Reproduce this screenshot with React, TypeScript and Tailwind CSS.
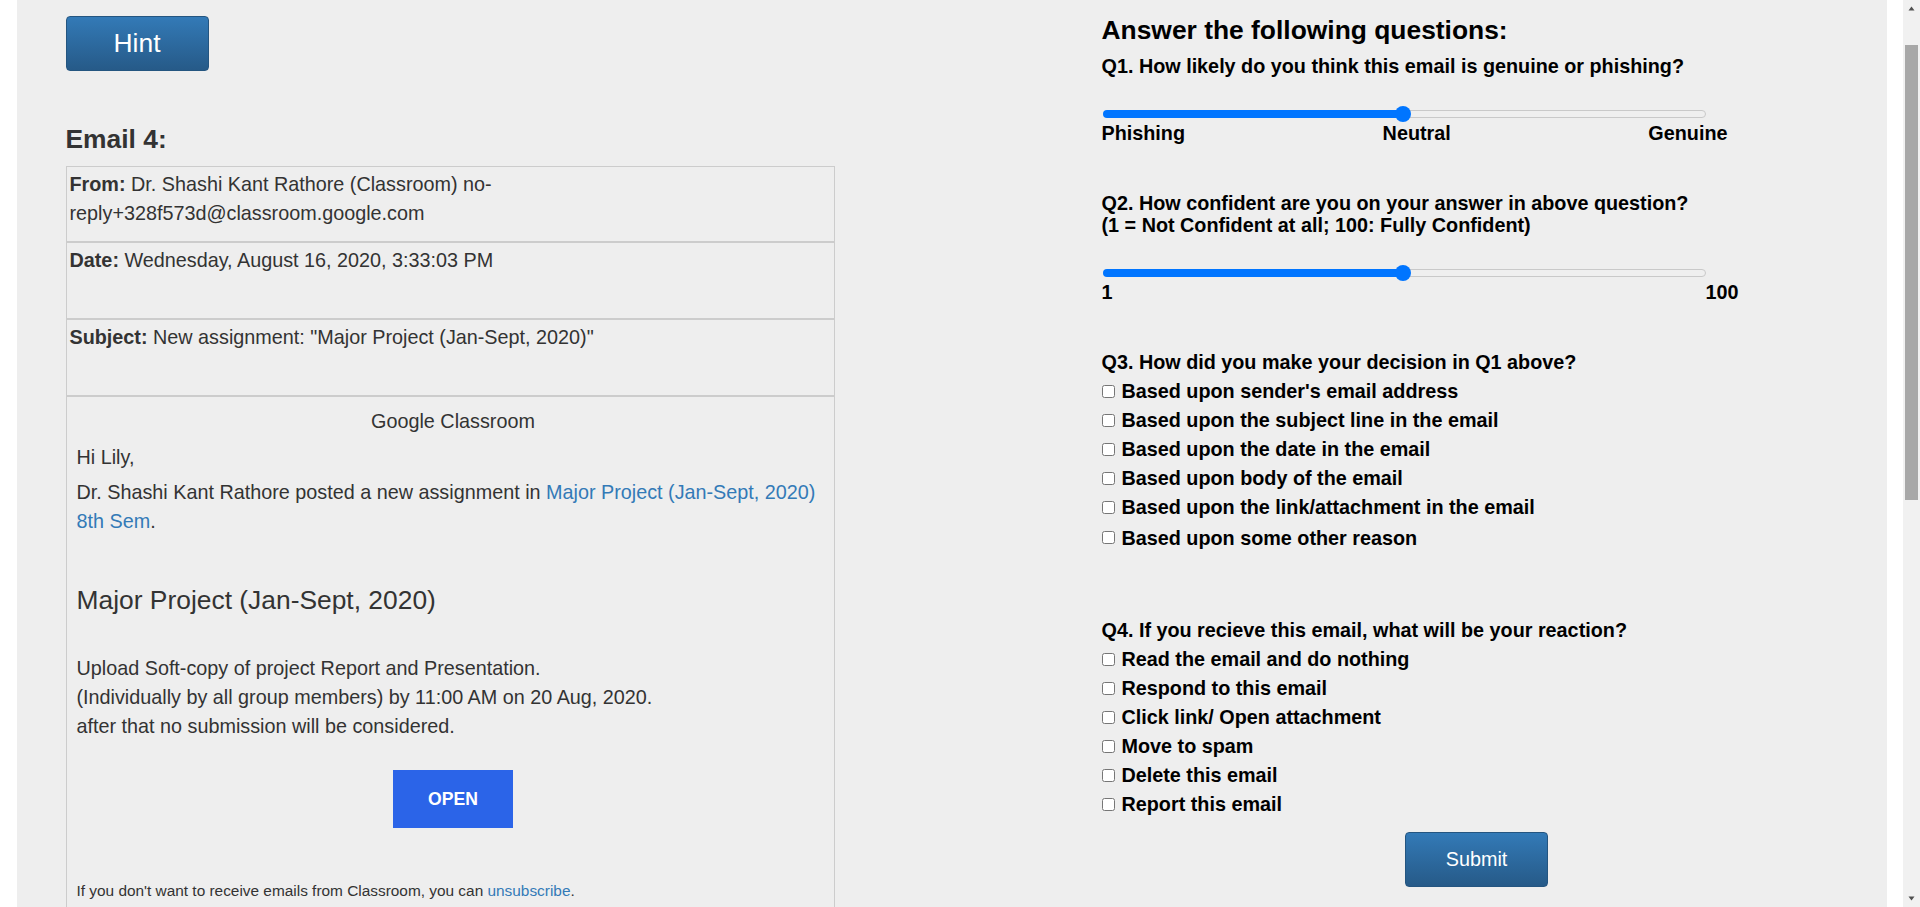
import React from "react";

const q3 = [
  "Based upon sender's email address",
  "Based upon the subject line in the email",
  "Based upon the date in the email",
  "Based upon body of the email",
  "Based upon the link/attachment in the email",
  "Based upon some other reason",
];

const q4 = [
  "Read the email and do nothing",
  "Respond to this email",
  "Click link/ Open attachment",
  "Move to spam",
  "Delete this email",
  "Report this email",
];

function Slider() {
  return (
    <div className="ml-[1px] flex h-[16px] w-[603px] items-center">
      <div className="h-[8px] flex-1 rounded-l-full bg-[#0075ff]" />
      <div className="relative z-10 -mx-[8px] h-[16px] w-[16px] shrink-0 rounded-full bg-[#0075ff]" />
      <div className="h-[8px] flex-1 rounded-r-full border border-[#c9c9c9] bg-[#efefef]" />
    </div>
  );
}

function CheckItem({ label, className }: { label: string; className?: string }) {
  return (
    <label className={"flex h-[22px] shrink-0 items-center " + (className ?? "")}>
      <span className="h-[13px] w-[13px] shrink-0 rounded-[2.5px] border border-[#767676] bg-white" />
      <span className="ml-[7px]">{label}</span>
    </label>
  );
}

export default function App() {
  return (
    <div className="flex h-[907px] w-full overflow-hidden bg-white font-['Liberation_Sans',Arial,sans-serif]">
      <div className="flex min-w-0 flex-1 justify-center">
        <div className="flex h-full w-[1870px] shrink-0 items-start bg-[#eeeeee]">
          {/* Left column */}
          <div className="ml-[49px] block w-[769px] shrink-0 pt-[16px] text-[19.8px] leading-[28.6px] text-[#333]">
            <button className="flex h-[55px] w-[143px] items-center justify-center rounded-[4px] border border-[#245580] bg-linear-to-b from-[#337ab7] to-[#265a88] text-[26.4px] leading-none text-white">
              Hint
            </button>
            <h3 className="mt-[54px] text-[26.4px] font-bold leading-[29px] text-[#333]">Email 4:</h3>
            <div className="mt-[12px] border border-[#cccccc]">
              <div className="h-[76px] border-b-2 border-[#cccccc] px-[3px] pt-[3px]">
                <b>From:</b> Dr. Shashi Kant Rathore (Classroom) no-
                <br />
                reply+328f573d@classroom.google.com
              </div>
              <div className="h-[77px] border-b-2 border-[#cccccc] px-[3px] pt-[3px]">
                <b>Date:</b> Wednesday, August 16, 2020, 3:33:03 PM
              </div>
              <div className="h-[77px] border-b-2 border-[#cccccc] px-[3px] pt-[3px]">
                <b>Subject:</b> New assignment: "Major Project (Jan-Sept, 2020)"
              </div>
              <div className="pl-[10px] pr-[4px] pt-[10px] pb-[40px]">
                <p className="text-center">Google Classroom</p>
                <p className="mt-[7px]">Hi Lily,</p>
                <p className="mt-[7px]">
                  Dr. Shashi Kant Rathore posted a new assignment in{" "}
                  <a className="text-[#337ab7]">
                    Major Project (Jan-Sept, 2020)
                    <br />
                    8th Sem
                  </a>
                  .
                </p>
                <p className="mt-[51px] text-[26.4px] leading-[29px]">Major Project (Jan-Sept, 2020)</p>
                <p className="mt-[39px]">
                  Upload Soft-copy of project Report and Presentation.
                  <br />
                  (Individually by all group members) by 11:00 AM on 20 Aug, 2020.
                  <br />
                  after that no submission will be considered.
                </p>
                <div className="mt-[30px] flex justify-center">
                  <div className="flex h-[58px] w-[120px] items-center justify-center bg-[#2b64e8] text-[17.6px] font-bold text-white">
                    OPEN
                  </div>
                </div>
                <p className="mt-[52px] text-[15.4px] leading-[22px]">
                  If you don't want to receive emails from Classroom, you can{" "}
                  <a className="text-[#337ab7]">unsubscribe</a>.
                </p>
              </div>
            </div>
          </div>

          {/* Right column */}
          <div className="ml-[267px] block w-[750px] shrink-0 pt-[16px] text-[19.8px] font-bold leading-[22px] text-black">
            <h3 className="text-[26.4px] leading-[29px]">Answer the following questions:</h3>
            <p className="mt-[9.5px]">Q1. How likely do you think this email is genuine or phishing?</p>
            <div className="mt-[29px]">
              <Slider />
            </div>
            <div className="flex w-[626px] justify-between">
              <span>Phishing</span>
              <span>Neutral</span>
              <span>Genuine</span>
            </div>
            <p className="mt-[48.3px]">
              Q2. How confident are you on your answer in above question?
              <br />
              (1 = Not Confident at all; 100: Fully Confident)
            </p>
            <div className="mt-[29px]">
              <Slider />
            </div>
            <div className="flex w-[637px] justify-between">
              <span>1</span>
              <span>100</span>
            </div>
            <p className="mt-[48.7px]">Q3. How did you make your decision in Q1 above?</p>
            <div className="mt-[6.7px] flex flex-col gap-[7px]">
              {q3.map((t, i) => (
                <CheckItem key={t} label={t} className={i === q3.length - 1 ? "mt-[1.6px]" : ""} />
              ))}
            </div>
            <p className="mt-[70.4px]">Q4. If you recieve this email, what will be your reaction?</p>
            <div className="mt-[7px] flex flex-col gap-[7px]">
              {q4.map((t) => (
                <CheckItem key={t} label={t} />
              ))}
            </div>
            <div className="mt-[17px] flex justify-center">
              <button className="flex h-[55px] w-[143px] items-center justify-center rounded-[4px] border border-[#245580] bg-linear-to-b from-[#337ab7] to-[#265a88] text-[19.8px] font-normal leading-none text-white">
                Submit
              </button>
            </div>
          </div>
        </div>
      </div>

      {/* Scrollbar */}
      <div className="flex h-full w-[17px] shrink-0 flex-col bg-[#f1f1f1]">
        <div className="flex h-[17px] items-center justify-center">
          <svg width="7" height="5" viewBox="0 0 7 5">
            <path d="M3.5 0.5 L6.5 4.5 L0.5 4.5 Z" fill="#505050" />
          </svg>
        </div>
        <div className="mx-[2px] mt-[28px] h-[455px] bg-[#a8a8a8]" />
        <div className="flex-1" />
        <div className="flex h-[17px] items-center justify-center">
          <svg width="7" height="5" viewBox="0 0 7 5">
            <path d="M0.5 0.5 L6.5 0.5 L3.5 4.5 Z" fill="#505050" />
          </svg>
        </div>
      </div>
    </div>
  );
}
